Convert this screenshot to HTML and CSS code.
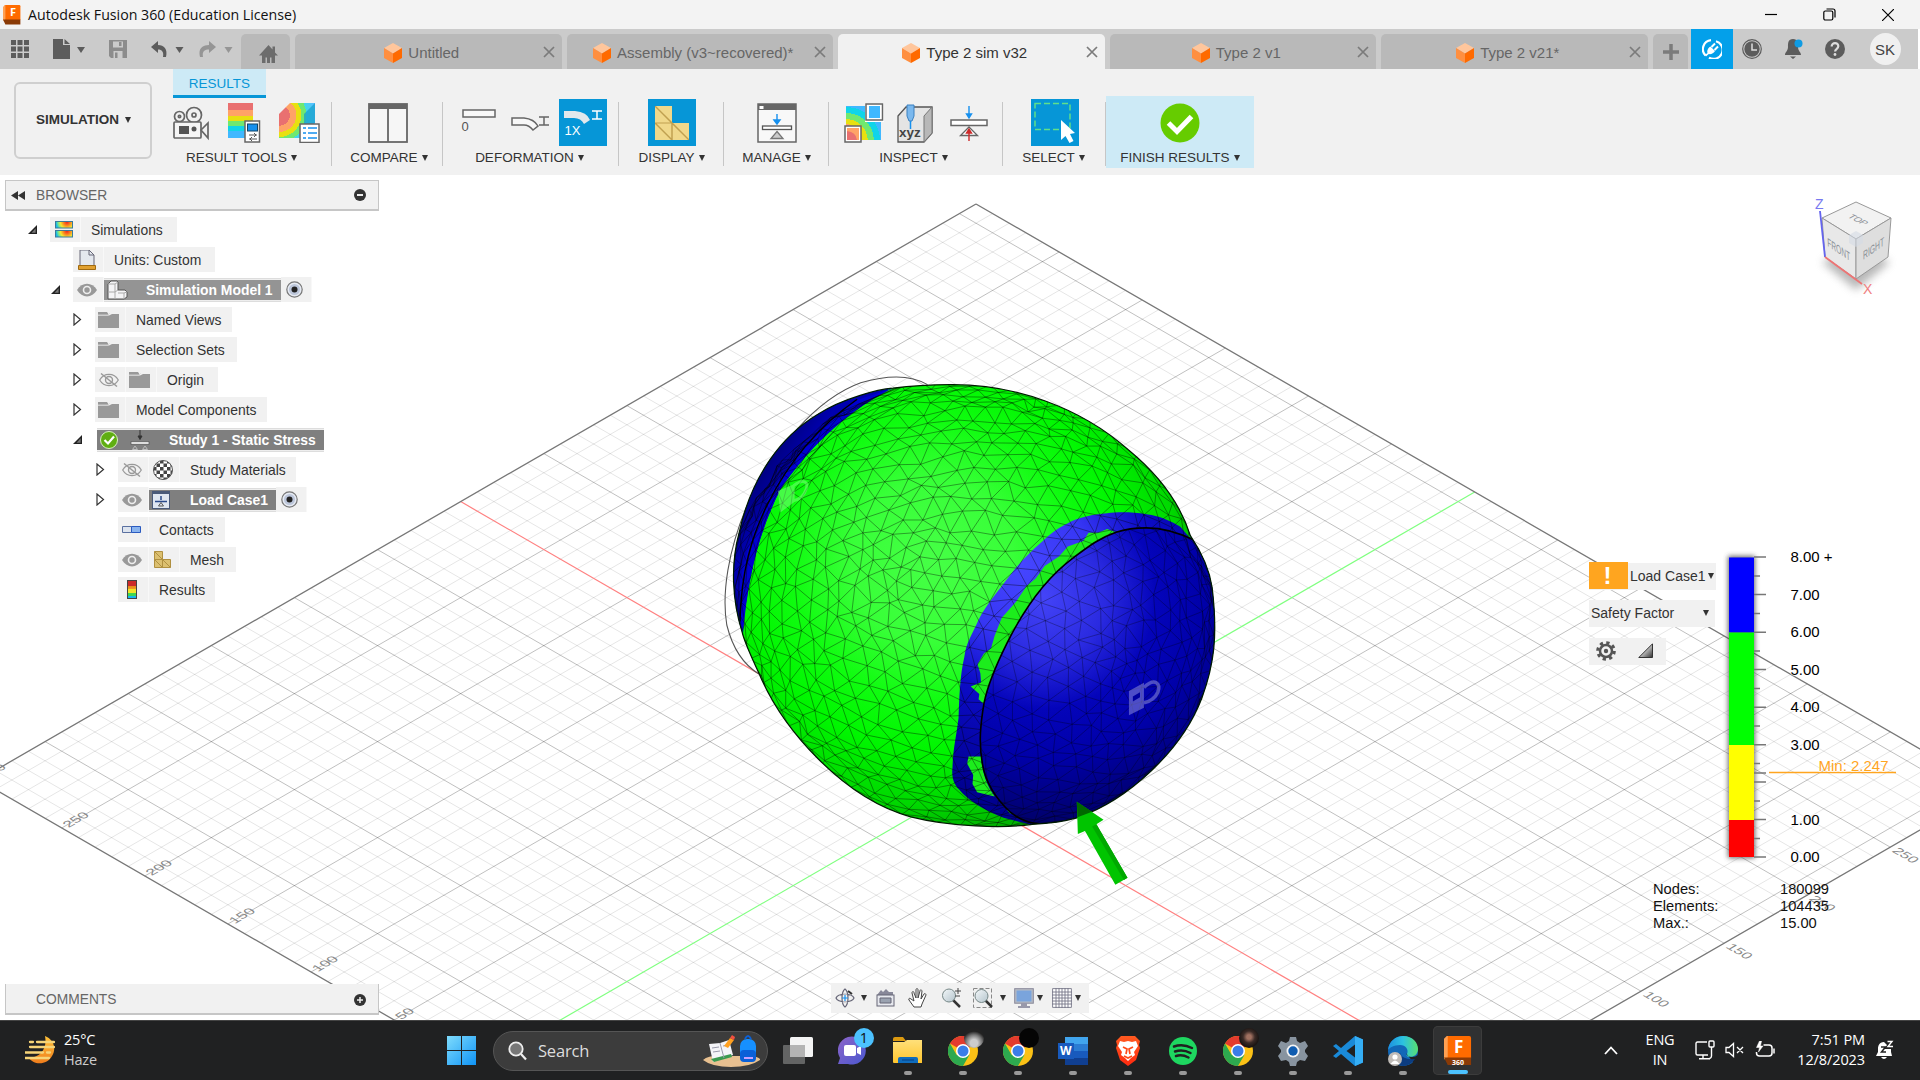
FILE: index.html
```html
<!DOCTYPE html>
<html lang="en">
<head>
<meta charset="utf-8">
<title>Autodesk Fusion 360 (Education License)</title>
<link rel="stylesheet" href="styles.css">
</head>
<body>
<svg class="defs" width="0" height="0" aria-hidden="true">
  <defs>
    <linearGradient id="g-rainbow" x1="0" y1="0" x2="0" y2="1"><stop offset="0" stop-color="#e97070"/><stop offset=".2" stop-color="#e97070"/><stop offset=".2" stop-color="#ffa366"/><stop offset=".36" stop-color="#ffa366"/><stop offset=".36" stop-color="#e8e010"/><stop offset=".5" stop-color="#e8e010"/><stop offset=".5" stop-color="#70e870"/><stop offset=".65" stop-color="#70e870"/><stop offset=".65" stop-color="#10d4e8"/><stop offset=".8" stop-color="#10d4e8"/><stop offset=".8" stop-color="#40b8ff"/></linearGradient>
    <linearGradient id="g-results" x1="0" y1="0" x2="0" y2="1"><stop offset=".3" stop-color="#cc2a2a"/><stop offset=".3" stop-color="#e8861a"/><stop offset=".5" stop-color="#f0a020"/><stop offset=".5" stop-color="#f2e42a"/><stop offset=".68" stop-color="#f2e42a"/><stop offset=".68" stop-color="#40d850"/><stop offset=".84" stop-color="#40d850"/><stop offset=".84" stop-color="#14b8f0"/></linearGradient>
    <radialGradient id="g-contour" gradientUnits="userSpaceOnUse" cx="12" cy="1" r="11"><stop offset="0" stop-color="#f02020"/><stop offset=".3" stop-color="#f88020"/><stop offset=".6" stop-color="#f4e830"/><stop offset=".85" stop-color="#60e0a0"/><stop offset="1" stop-color="#18b8e8"/></radialGradient>
    <radialGradient id="g-stress" cx="0" cy=".35" r="1"><stop offset=".3" stop-color="#e97070"/><stop offset=".3" stop-color="#ffa366"/><stop offset=".48" stop-color="#ffa366"/><stop offset=".48" stop-color="#e8e010"/><stop offset=".62" stop-color="#e8e010"/><stop offset=".62" stop-color="#70e870"/><stop offset=".76" stop-color="#70e870"/><stop offset=".76" stop-color="#40d8e8"/><stop offset="1" stop-color="#58c0ff"/></radialGradient>
    <radialGradient id="g-probe" cx="0" cy="1" r="1.1"><stop offset=".3" stop-color="#e97070"/><stop offset=".3" stop-color="#ffa366"/><stop offset=".42" stop-color="#ffa366"/><stop offset=".42" stop-color="#e8e010"/><stop offset=".56" stop-color="#e8e010"/><stop offset=".56" stop-color="#70e870"/><stop offset=".72" stop-color="#70e870"/><stop offset=".72" stop-color="#10d4e8"/><stop offset=".88" stop-color="#10d4e8"/><stop offset=".88" stop-color="#40b8ff"/></radialGradient>
    <linearGradient id="g-win" x1="0" y1="0" x2="1" y2="1"><stop offset="0" stop-color="#7fdcfd"/><stop offset="1" stop-color="#0f93f5"/></linearGradient>
    <linearGradient id="g-moon" x1="0" y1="0" x2="0" y2="1"><stop offset="0" stop-color="#ffc23a"/><stop offset="1" stop-color="#ef7d1c"/></linearGradient>
    <linearGradient id="g-folder" x1="0" y1="0" x2="0" y2="1"><stop offset="0" stop-color="#ffe07a"/><stop offset="1" stop-color="#ffc52e"/></linearGradient>
    <linearGradient id="g-chat" x1="0" y1="0" x2="1" y2="1"><stop offset="0" stop-color="#8c64c8"/><stop offset="1" stop-color="#4a58d0"/></linearGradient>
    <linearGradient id="g-brave" x1="0" y1="0" x2="0" y2="1"><stop offset="0" stop-color="#ff5a20"/><stop offset="1" stop-color="#ff2a10"/></linearGradient>
    <linearGradient id="g-edge" x1="0" y1="0" x2="1" y2="0"><stop offset="0" stop-color="#1c8fe0"/><stop offset=".5" stop-color="#2cc3e0"/><stop offset="1" stop-color="#58e070"/></linearGradient>
    <linearGradient id="g-glass" x1="0" y1="0" x2="1" y2="1"><stop offset="0" stop-color="#f4f8fa"/><stop offset="1" stop-color="#b4c4cc"/></linearGradient>
    <linearGradient id="g-tri" x1="0" y1="0" x2="1" y2="1"><stop offset=".3" stop-color="#f4f4f4"/><stop offset="1" stop-color="#303030"/></linearGradient>
    <symbol id="cube" viewBox="0 0 18 20"><path d="M9 0 18 5 9 10.500 0 5z" fill="#ffc69c"/><path d="M0 5l9 5.500V20L0 15z" fill="#ff8f40"/><path d="M18 5l-9 5.500V20l9-5z" fill="#ff6a00"/></symbol>
    <symbol id="close" viewBox="0 0 12 12"><path d="M1 1 11 11M11 1 1 11" stroke="#7b7b7b" stroke-width="1.700" fill="none"/></symbol>
    <symbol id="folder" viewBox="0 0 21 17"><path d="M0 1h9l2 3h-11zM0 4.500h11l3-1.500h7v14H0z" fill="#999"/><path d="M0 4h10l2-2" stroke="#ddd" stroke-width=".8" fill="none"/></symbol>
    <symbol id="eye" viewBox="0 0 20 14"><path d="M0 7C5-1.500 15-1.500 20 7 15 15.500 5 15.500 0 7z" fill="#999"/><circle cx="10" cy="7" r="3.500" fill="none" stroke="#eee" stroke-width="1.600"/></symbol>
    <symbol id="eyeoff" viewBox="0 0 20 14"><path d="M.7 7C5-.5 15-.5 19.300 7 15 14.500 5 14.500 .7 7z" fill="none" stroke="#999" stroke-width="1.200"/><circle cx="10" cy="7" r="3.500" fill="none" stroke="#999" stroke-width="1.400"/><path d="M2 .5 18 13.500" stroke="#999" stroke-width="1.400"/></symbol>
    <symbol id="open" viewBox="0 0 10 10"><path d="M10 0V10H0z" fill="#222"/><path d="M8.500 3.500v5H4z" fill="#777"/></symbol>
    <symbol id="shut" viewBox="0 0 9 13"><path d="M1 1v11l6.500-5.500z" fill="#fff" stroke="#333" stroke-width="1.200"/></symbol>
    <symbol id="radio" viewBox="0 0 17 17"><circle cx="8.500" cy="8.500" r="7.700" fill="#e6eaf2" stroke="#777" stroke-width="1.200"/><circle cx="8.500" cy="8.500" r="5.500" fill="#bcc6da"/><circle cx="8.500" cy="8.500" r="3" fill="#222"/></symbol>
    <symbol id="mesh" viewBox="0 0 28 34"><path d="M0 0h14v17h14v17H0z" fill="#f0d88a"/><path d="M0 0 14 17M0 17h14v17M0 17l14 17M14 17l14 17M0 0h14v17h14v17H0z" fill="none" stroke="#c0a050" stroke-width="1.300"/></symbol>
    <symbol id="mesh-dark" viewBox="0 0 17 17"><path d="M.5 .5h8v8h8v8H.5z" fill="#dcc070" stroke="#b09040"/><path d="M.5 .5l8 8M.5 8.500h8v8M.5 8.500l8 8M8.500 8.500l8 8" fill="none" stroke="#b09040"/></symbol>
    <symbol id="chrome" viewBox="0 0 30 30"><circle cx="15" cy="15" r="15" fill="#fbc116"/><path d="M15 15 2 7.500A15 15 0 0 1 28 7.500z" fill="#e33b2e"/><path d="M2 7.500A15 15 0 0 0 15 30l6.500-11.300L8.500 18.700z" fill="#2da94f"/><circle cx="15" cy="15" r="7" fill="#fff"/><circle cx="15" cy="15" r="5.500" fill="#3a7de8"/></symbol>
    <symbol id="f360" viewBox="0 0 30 32"><path d="M3 0h24a2 2 0 0 1 2 2v22H3z" fill="#ff6b00"/><path d="M3 0 0 3v22l4-2V0z" fill="#ffa052"/><path d="M0 23h29v8H4z" fill="#8a3a06"/></symbol>
  </defs>
</svg>

<header class="titlebar">
  <span class="app-icon"><svg viewBox="0 0 30 32" preserveAspectRatio="none"><use href="#f360"/></svg><b>F</b></span>
  <span class="title">Autodesk Fusion 360 (Education License)</span>
  <div class="win-buttons">
    <svg width="12" height="12" viewBox="0 0 12 12"><path d="M0 5.500h12" stroke="#000" stroke-width="1.200"/></svg>
    <svg width="13" height="13" viewBox="0 0 13 13" fill="none" stroke="#000" stroke-width="1.200"><rect x=".8" y="3" width="9" height="9" rx="1.500"/><path d="M3.500 1h6.500a2 2 0 0 1 2 2v6.500"/></svg>
    <svg width="12" height="12" viewBox="0 0 12 12" stroke="#000" stroke-width="1.200"><path d="M0 0 12 12M12 0 0 12"/></svg>
  </div>
</header>

<nav class="tabbar">
  <div class="quick">
    <svg width="18" height="18" viewBox="0 0 18 18" fill="#5c5c5c"><path d="M0 0h5v5H0zM6.500 0h5v5h-5zM13 0h5v5h-5zM0 6.500h5v5H0zM6.500 6.500h5v5h-5zM13 6.500h5v5h-5zM0 13h5v5H0zM6.500 13h5v5h-5zM13 13h5v5h-5z"/></svg>
    <svg class="q-file" width="33" height="20" viewBox="0 0 33 20" fill="#5c5c5c"><path d="M0 0h10v6h7v14H0zM11.500 0 17 5h-5.500z"/><path d="M24 8h8l-4 6z"/></svg>
    <svg class="q-save" width="18" height="18" viewBox="0 0 18 18"><path d="M0 0h18v18H2l-2-2z" fill="#8c8c8c"/><path d="M4 1.500h10v6H4zM4.500 11h9v7h-9z" fill="#cbcbcb"/><path d="M10 2h2.500v4H10zM6 12.500h2.500V18H6z" fill="#8c8c8c"/></svg>
    <svg class="q-undo" width="34" height="17" viewBox="0 0 34 17"><path d="M7 0v4C13 4 17 8 15 16h-3c1-5-1-7.500-5-7.500V12L0 6z" fill="#5c5c5c"/><path d="M24.500 6h8l-4 6z" fill="#5c5c5c"/></svg>
    <svg class="q-redo" width="35" height="17" viewBox="0 0 35 17"><path d="M10 0v4C3 4-1 8 1 16h3c-1-5 1-7.500 6-7.500V12l7-6z" fill="#959595"/><path d="M25.500 6h8l-4 6z" fill="#959595"/></svg>
  </div>
  <div class="tab home"><svg width="19" height="18" viewBox="0 0 19 18" fill="#6c6c6c"><path d="M0 10.500 9.500 0l4 4.500V1.500H16v6l3 3h-3V18h-3.500v-5.500h-1.500V18H8v-5.500H6.500V18H3v-7.500z"/></svg></div>
  <div class="tab"><div class="tab-name"><svg width="18" height="20"><use href="#cube"/></svg>Untitled</div><svg class="x" width="12" height="12"><use href="#close"/></svg></div>
  <div class="tab"><div class="tab-name"><svg width="18" height="20"><use href="#cube"/></svg>Assembly (v3~recovered)*</div><svg class="x" width="12" height="12"><use href="#close"/></svg></div>
  <div class="tab active"><div class="tab-name"><svg width="18" height="20"><use href="#cube"/></svg>Type 2 sim v32</div><svg class="x" width="12" height="12"><use href="#close"/></svg></div>
  <div class="tab"><div class="tab-name"><svg width="18" height="20"><use href="#cube"/></svg>Type 2 v1</div><svg class="x" width="12" height="12"><use href="#close"/></svg></div>
  <div class="tab"><div class="tab-name"><svg width="18" height="20"><use href="#cube"/></svg>Type 2 v21*</div><svg class="x" width="12" height="12"><use href="#close"/></svg></div>
  <div class="tab plus"><svg width="16" height="16" viewBox="0 0 16 16"><path d="M8 0v16M0 8h16" stroke="#7b7b7b" stroke-width="3.500"/></svg></div>
  <div class="account">
    <span class="ext"><svg width="20" height="20" viewBox="0 0 20 20"><path d="M3.500 16.500A9 9 0 0 1 9 1.200M14 2.200A9 9 0 1 1 7 18.600" fill="none" stroke="#fff" stroke-width="2.200"/><path d="M5.500 14c-.7-2 .5-5.500 3-6.500l4.500 4.500c-1 2.500-4.500 3.500-6.200 3L4 17.500 2.800 16z" fill="#fff"/><path d="M9.500 8l3.500-3.500M12.500 11l3.500-3.500" stroke="#fff" stroke-width="2"/></svg></span>
    <svg width="20" height="20" viewBox="0 0 20 20"><circle cx="10" cy="10" r="9.300" fill="none" stroke="#5c5c5c" stroke-width="1.200"/><circle cx="10" cy="10" r="7.700" fill="#5c5c5c"/><path d="M10 4.500V11h5" fill="none" stroke="#ddd" stroke-width="1.500"/></svg>
    <svg width="20" height="20" viewBox="0 0 20 20"><path d="M9 0c5 0 5 4 5 8s3 5 3 8H1c0-3 3-4 3-8s0-8 5-8zM6 17.500h6L9 20z" fill="#5c5c5c"/><circle cx="14.500" cy="4.500" r="4" fill="#0f9be3"/></svg>
    <svg width="20" height="20" viewBox="0 0 20 20"><circle cx="10" cy="10" r="10" fill="#5c5c5c"/><path d="M6.700 7.500C6.500 3 13.500 3 13.300 7.300c0 2.500-3.200 2.500-3.200 5.200" fill="none" stroke="#ddd" stroke-width="2.200"/><circle cx="10" cy="15.500" r="1.400" fill="#ddd"/></svg>
    <span class="avatar">SK</span>
  </div>
</nav>

<section class="ribbon">
  <div class="workspace">SIMULATION<i class="caret"></i></div>
  <div class="group g-tools">
    <div class="ribbon-tab">RESULTS</div>
    <div class="icons">
      <svg width="37" height="40" viewBox="0 0 37 40" fill="none" stroke="#666" stroke-width="1.700"><circle cx="6.500" cy="13.500" r="5"/><circle cx="6.500" cy="13.500" r="1.200"/><circle cx="21" cy="12" r="7.500"/><circle cx="21" cy="12" r="2"/><rect x="1" y="19" width="27" height="16" rx="1" fill="#f5f5f5"/><path d="M28 27l7-7v15z"/><rect x="6" y="23" width="10" height="8" fill="#555" stroke="none"/><circle cx="21" cy="26" r="2.500" fill="#555" stroke="none"/></svg>
      <svg width="33" height="40" viewBox="0 0 33 40"><rect width="25" height="35" y="0" fill="url(#g-rainbow)"/><rect x="17" y="18" width="14.500" height="21" fill="#fff" stroke="#666" stroke-width="1.500"/><rect x="19.500" y="21" width="10" height="7" fill="#1690ee" stroke="#146"/><path d="M21 32h8M26 30l2 2-2 2M29 36h-8m3-2-2 2 2 2" stroke="#555" fill="none"/></svg>
      <svg width="41" height="40" viewBox="0 0 41 40"><path d="M0 11 11 0h25v20L25 35H0z" fill="url(#g-stress)"/><path d="M25 11 36 0v20L25 35z" fill="#18a0cc" opacity=".75"/><rect x="21" y="21" width="19" height="18.500" fill="#fff" stroke="#666" stroke-width="1.500"/><path d="M24 25h3M24 30h3M24 35h3M29 25h9M29 30h9M29 35h9" stroke="#1690ee" stroke-width="1.700"/></svg>
    </div>
    <div class="label">RESULT TOOLS<i class="caret"></i></div>
  </div>
  <div class="group g-compare"><div class="icons"><svg width="40" height="40" viewBox="0 0 40 40"><rect x="1" y="1" width="38" height="38" fill="#f6f6f6" stroke="#666" stroke-width="1.800"/><path d="M1 1h38v5H1z" fill="#666"/><path d="M20 6v33" stroke="#666" stroke-width="1.800"/></svg></div><div class="label">COMPARE<i class="caret"></i></div></div>
  <div class="group g-deform">
    <div class="icons">
      <span class="deform"><svg width="34" height="10" viewBox="0 0 34 10"><rect x="1" y="2" width="32" height="7" fill="#f8f8f8" stroke="#666" stroke-width="1.500"/></svg><em>0</em></span>
      <svg width="38" height="40" viewBox="0 0 38 40" fill="#f8f8f8" stroke="#666" stroke-width="1.500"><path d="M1 15h12q10 1 14 8l-5 4q-4-5-9-5H1z"/><path d="M28 14h10M28 22h10M33 14v8"/></svg>
      <span class="tile on"><svg width="48" height="47" viewBox="0 0 48 47"><path d="M5 12h11q12 1 15 9l-6 4q-3-6-10-6H5z" fill="#e2e8ec"/><path d="M33 12h10M33 20h10M38 12v8" stroke="#fff" stroke-width="1.500"/></svg><em>1X</em></span>
    </div><div class="label">DEFORMATION<i class="caret"></i></div></div>
  <div class="group g-display"><div class="icons"><span class="tile on"><svg width="34" height="34" viewBox="0 0 28 34" preserveAspectRatio="none"><path d="M0 0h14v17h14v17H0z" fill="#f0d88a"/><path d="M0 0 14 17M0 17h14v17M0 17l14 17M14 17l14 17M14 17v17" fill="none" stroke="#c0a050" stroke-width="1.200"/></svg></span></div><div class="label">DISPLAY<i class="caret"></i></div></div>
  <div class="group g-manage"><div class="icons"><svg width="40" height="40" viewBox="0 0 40 40"><rect x="1" y="1" width="38" height="38" fill="#f8f8f8" stroke="#666" stroke-width="1.500"/><path d="M1 1h38v6H1z" fill="#666"/><path d="M2.500 3h4v3h-4z" fill="#fff"/><path d="M20 11v8M17 17l3 4 3-4z" stroke="#1690ee" fill="#1690ee" stroke-width="1.400"/><rect x="5.500" y="23" width="29" height="3.500" fill="#fff" stroke="#555" stroke-width="1.300"/><path d="M20 28.500l6 7H14z" fill="#ccc" stroke="#777" stroke-width="1.300"/></svg></div><div class="label">MANAGE<i class="caret"></i></div></div>
  <div class="group g-inspect">
    <div class="icons">
      <svg width="40" height="40" viewBox="0 0 40 40"><rect x="2" y="3" width="35" height="34" fill="url(#g-probe)"/><rect x="23" y="1" width="15" height="16" fill="#40b8ff" stroke="#fff" stroke-width="4"/><rect x="22" y="1" width="16.500" height="16" fill="none" stroke="#666" stroke-width="1.500"/><path d="M1 23h16v16H1z" fill="#fff" stroke="#666" stroke-width="1.500"/><path d="M3 25h12v12H3z" fill="#ffa366"/><path d="M3 28q9 1 10 9H3z" fill="#e97070"/></svg>
      <svg width="36" height="40" viewBox="0 0 36 40"><path d="M1 13 9 4h26v26l-8 9H1z" fill="#e4e4e4" stroke="#555" stroke-width="1.300"/><path d="M27 13 35 4v26l-8 9z" fill="#b8b8b8" stroke="#777"/><path d="M10 2h7v11l-2 5h-3l-2-5z" fill="#7ab8ee" stroke="#3a80c0"/><path d="M13.500 18v8" stroke="#1690ee" stroke-width="1.500"/><text x="2" y="34" class="xyz-text">xyz</text></svg>
      <svg width="38" height="40" viewBox="0 0 38 40"><path d="M19 3v10M16.500 11l2.500 4 2.500-4z" stroke="#1690ee" fill="#1690ee" stroke-width="1.400"/><rect x="1" y="17" width="36" height="5.500" fill="#fff" stroke="#666" stroke-width="1.500"/><path d="M19 24l8.500 8.500h-17z" fill="#fff" stroke="#666" stroke-width="1.300"/><path d="M19 38V27M16.500 30l2.500-4 2.500 4z" stroke="#cc2a2a" fill="#cc2a2a" stroke-width="1.400"/></svg>
    </div><div class="label">INSPECT<i class="caret"></i></div></div>
  <div class="group g-select"><div class="icons"><span class="tile on"><svg width="48" height="47" viewBox="0 0 48 47"><rect x="4" y="4.500" width="35" height="26" fill="none" stroke="#5fe08a" stroke-width="1.500" stroke-dasharray="6 3"/><path d="M30 21v20l4.500-4 4 7 4-2-3.500-7 5-1z" fill="#fff"/></svg></span></div><div class="label">SELECT<i class="caret"></i></div></div>
  <div class="group g-finish"><div class="icons"><svg width="40" height="40" viewBox="0 0 40 40"><circle cx="20" cy="20" r="19.500" fill="#66cc00"/><path d="M8.500 20 17 28.500 31.500 13.500" fill="none" stroke="#fff" stroke-width="5"/></svg></div><div class="label">FINISH RESULTS<i class="caret"></i></div></div>
</section>

<main class="viewport">
  <svg class="scene" width="1920" height="845" viewBox="0 175 1920 845">
    <defs>
      <radialGradient id="s-green" gradientUnits="userSpaceOnUse" cx="650" cy="590" r="760"><stop offset="0" stop-color="#46ff46"/><stop offset=".3" stop-color="#38ff38"/><stop offset=".52" stop-color="#10fc10"/><stop offset=".7" stop-color="#00f600"/><stop offset=".9" stop-color="#00d800"/><stop offset="1" stop-color="#00b400"/></radialGradient>
      <radialGradient id="s-band" gradientUnits="userSpaceOnUse" cx="900" cy="600" r="650"><stop offset="0" stop-color="#4646ff"/><stop offset=".3" stop-color="#3636f4"/><stop offset=".55" stop-color="#0c0cc8"/><stop offset="1" stop-color="#000090"/></radialGradient>
      <radialGradient id="s-cap" gradientUnits="userSpaceOnUse" cx="960" cy="690" r="700"><stop offset="0" stop-color="#4444f8"/><stop offset=".25" stop-color="#2a2ae0"/><stop offset=".45" stop-color="#0404ba"/><stop offset=".65" stop-color="#0000a8"/><stop offset=".85" stop-color="#000078"/><stop offset="1" stop-color="#000050"/></radialGradient>
      <linearGradient id="s-back" gradientUnits="userSpaceOnUse" x1="150" y1="350" x2="230" y2="400"><stop offset="0" stop-color="#000078"/><stop offset="1" stop-color="#0000b0"/></linearGradient>
      <clipPath id="c-body"><path id="body-shape" d="M700 97C880 95 1065 160 1200 280C1285 350 1345 430 1373 520C1410 575 1427 620 1434 665C1450 800 1440 880 1405 975C1350 1120 1200 1260 1055 1310C1010 1323 970 1326 930 1328C850 1340 700 1335 590 1307C400 1255 230 1060 165 905C140 850 125 820 118 790C90 700 85 600 110 510C145 350 230 240 330 180C400 135 500 110 540 107C600 99 640 97 700 97Z"/></clipPath>
      <clipPath id="c-cap"><path d="M1373 525C1335 508 1290 498 1250 498C1215 498 1190 502 1165 510C1120 525 1085 552 1045 582C960 645 900 740 860 820C825 890 805 940 795 990C785 1050 780 1100 791 1160C800 1210 830 1258 870 1295C895 1315 920 1325 950 1327L1500 1400V600Z"/></clipPath>
    </defs>
    <path id="grid-minor" class="minor"/><path id="grid-major" class="major"/>
    <path id="grid-x" class="axis-x"/><path id="grid-y" class="axis-y"/><path id="grid-edge" class="edge"/>
    <g id="grid-labels"></g>
    <g transform="translate(700 350) scale(.35714)">
      <path d="M637 97C600 75 540 65 450 92C330 135 200 280 130 440C80 560 60 680 75 770C90 830 120 880 165 907" fill="none" stroke="#555" stroke-width="3"/>
      <use href="#body-shape" fill="url(#s-green)"/>
      <g clip-path="url(#c-body)">
        <path d="M0 0H560L525 114C400 180 300 280 225 390C170 500 135 620 118 800L0 900Z" fill="url(#s-back)"/>
        <path d="M560 100 525 114C400 180 300 280 225 390C170 500 135 620 120 800L108 680C122 580 150 500 190 420C260 290 340 210 440 140Z" fill="#0000d0"/>
        <path d="M1400 560 1345 495C1320 480 1290 465 1250 460C1210 453 1170 453 1140 457C1100 460 1060 468 1030 485C1000 500 980 515 960 535C920 570 890 600 865 635C835 675 800 715 780 755C760 800 745 820 740 860C728 910 726 970 724 1030C718 1080 708 1120 707 1170C704 1195 710 1215 725 1230C750 1262 800 1290 850 1310L930 1330 1200 1330Z" fill="url(#s-band)"/>
        <path d="M1165 510 1140 501 1115 512 1088 512 1073 535 1030 550 1005 578 965 605 940 640 915 660 885 705 845 750 825 800 815 835 795 850 777 880 785 905 787 930 758 942 782 963 780 978 797 993C805 940 830 880 860 820C900 740 960 645 1045 582ZM787 1138 752 1138 748 1158 765 1190 763 1215 776 1238 825 1250C800 1215 790 1180 787 1138ZM1325 515 1345 518 1362 538ZM858 1286 875 1296 868 1298Z" fill="#1ced1c"/>
        <path id="mesh-body" class="mesh"/>
        <path d="M440 138C330 215 250 310 190 430C145 520 115 620 112 760" fill="none" stroke="#000" stroke-width="4"/>
        <g clip-path="url(#c-cap)"><path d="M700 400H1500V1400H700z" fill="url(#s-cap)"/><path id="mesh-cap" class="mesh cap"/></g>
        <path d="M1390 535C1335 508 1290 498 1250 498C1215 498 1190 502 1165 510C1120 525 1085 552 1045 582C960 645 900 740 860 820C825 890 805 940 795 990C785 1050 780 1100 791 1160C800 1210 830 1258 870 1295C895 1315 920 1325 950 1327" fill="none" stroke="#000" stroke-width="4.500"/>
      </g>
      <use href="#body-shape" fill="none" stroke="#001a00" stroke-width="3.500"/>
      <g fill="#8080d8" opacity=".6"><path d="M1201 955 1243 932V1002L1201 1023Z"/><path d="M1243 945C1275 915 1290 935 1282 958C1272 980 1255 985 1243 988" fill="none" stroke="#8080d8" stroke-width="10"/></g><path d="M1212 970 1232 958V972L1212 984Z" fill="#0000a0"/>
      <g fill="#90ff90" opacity=".45"><path d="M218 395 265 375V425L225 455Z"/><path d="M262 380C290 358 305 370 297 390C290 412 272 420 262 422" fill="none" stroke="#90ff90" stroke-width="8"/></g>
      <path d="M1055 1265 1130 1315 1110 1328 1197 1478 1163 1497 1078 1347 1058 1355Z" fill="#00c400"/><path d="M1055 1265 1098 1293 1057 1308Z" fill="#006800"/><path d="M1110 1328 1197 1478 1187 1484 1098 1334Z" fill="#00a800"/>
    </g>
  </svg>

  <svg class="viewcube" width="90" height="110" viewBox="1800 190 90 110">
    <defs><filter id="soft" x="-30%" y="-30%" width="160%" height="160%"><feGaussianBlur stdDeviation="4"/></filter></defs>
    <path d="M1822 262 1856 290 1890 262 1856 245z" fill="#888" opacity=".6" filter="url(#soft)"/>
    <path d="M1856 202 1891 218 1856 239 1822 218z" fill="#f2f2f2" stroke="#999"/><path d="M1822 218 1856 239V279L1825 257z" fill="#e8e8e8" stroke="#999"/><path d="M1891 218 1856 239V279L1888 257z" fill="#dedede" stroke="#999"/>
    <path d="M1849 235l7-4 7 4v8l-7 4-7-4z" fill="#d4dae4" opacity=".6"/>
    <path d="M1820 211 1825 257" stroke="#6464ee" stroke-width="1.800"/><path d="M1825 257 1862 284" stroke="#ee7474" stroke-width="1.800"/>
    <text class="face" transform="matrix(.83 .42 -.8 .45 1847 217)" font-size="10">TOP</text>
    <text class="face" transform="matrix(.66 .44 .05 1.200 1827.500 246)" font-size="10">FRONT</text>
    <text class="face" transform="matrix(.68 -.48 0 1.200 1863 260)" font-size="10">RIGHT</text>
    <text x="1815" y="209" class="ax z">Z</text><text x="1863" y="294" class="ax xx">X</text>
  </svg>

  <aside class="browser">
    <div class="panel-head"><svg width="14" height="9" viewBox="0 0 14 9" fill="#333"><path d="M7 0v9L0 4.500zM14 0v9L7 4.500z"/></svg><span>BROWSER</span><svg width="12" height="12" viewBox="0 0 12 12"><circle cx="6" cy="6" r="6" fill="#333"/><path d="M3 6h6" stroke="#eee" stroke-width="2"/></svg></div>
    <div class="tree">
      <div class="row l0"><span class="tw"><svg width="9" height="9"><use href="#open"/></svg></span><span class="c"><svg width="18" height="17" viewBox="0 0 18 17"><rect x=".5" y=".5" width="17" height="6.500" fill="url(#g-contour)" stroke="#3a7a9a"/><g transform="translate(0 9)"><rect x=".5" y=".5" width="17" height="6.500" fill="url(#g-contour)" stroke="#3a7a9a"/></g></svg></span><span class="t w96">Simulations</span></div>
      <div class="row l1"><span class="tw"></span><span class="c"><svg width="18" height="20" viewBox="0 0 18 20"><path d="M2 0h9l5 5v11H2z" fill="#e4e8ee" stroke="#667"/><path d="M11 0v5h5" fill="none" stroke="#667"/><path d="M.5 15.500h17v4H.5z" fill="#e0a030" stroke="#a06a10"/></svg></span><span class="t w111">Units: Custom</span></div>
      <div class="row l1"><span class="tw"><svg width="9" height="9"><use href="#open"/></svg></span><span class="c"><svg width="20" height="14"><use href="#eye"/></svg></span><span class="sel light"><svg width="21" height="20" viewBox="0 0 21 20" fill="#f4f4f6" stroke="#555"><path d="M1 4 4 1h6l1 1v8h7l2 2v5l-3 2H1z"/><path d="M1 4h7l3-2M8 4v15M1 12h7l3-2M11 13h6l3-1M17 13v6" fill="none" stroke="#aaa"/></svg><b>Simulation Model 1</b></span><span class="c"><svg width="17" height="17"><use href="#radio"/></svg></span></div>
      <div class="row l2"><span class="tw"><svg width="9" height="13"><use href="#shut"/></svg></span><span class="c"><svg width="21" height="17"><use href="#folder"/></svg></span><span class="t w106">Named Views</span></div>
      <div class="row l2"><span class="tw"><svg width="9" height="13"><use href="#shut"/></svg></span><span class="c"><svg width="21" height="17"><use href="#folder"/></svg></span><span class="t w111">Selection Sets</span></div>
      <div class="row l2"><span class="tw"><svg width="9" height="13"><use href="#shut"/></svg></span><span class="c"><svg width="20" height="14"><use href="#eyeoff"/></svg></span><span class="c"><svg width="21" height="17"><use href="#folder"/></svg></span><span class="t w61">Origin</span></div>
      <div class="row l2"><span class="tw"><svg width="9" height="13"><use href="#shut"/></svg></span><span class="c"><svg width="21" height="17"><use href="#folder"/></svg></span><span class="t w141">Model Components</span></div>
      <div class="row l2"><span class="tw"><svg width="9" height="9"><use href="#open"/></svg></span><span class="sel study"><svg width="18" height="18" viewBox="0 0 18 18"><circle cx="9" cy="9" r="8.500" fill="#5fae12" stroke="#d8f0c0"/><path d="M4.500 9 8 12.500 14 5.500" fill="none" stroke="#fff" stroke-width="2.200"/></svg><svg class="stress" width="20" height="20" viewBox="0 0 20 20"><path d="M10 0v8M8 6l2 3.500L12 6z" stroke="#333" fill="#333"/><path d="M1 11.500h18v3H1z" fill="#ddd" stroke="#555" stroke-width=".7"/><path d="M5 16l2.500 3.500h-5zM15 16l2.500 3.500h-5z" fill="none" stroke="#bbb"/></svg><b>Study 1 - Static Stress</b></span></div>
      <div class="row l3"><span class="tw"><svg width="9" height="13"><use href="#shut"/></svg></span><span class="c"><svg width="20" height="14"><use href="#eyeoff"/></svg></span><span class="c"><svg width="20" height="20" viewBox="0 0 20 20"><defs><pattern id="checker" width="7" height="7" patternUnits="userSpaceOnUse"><rect width="7" height="7" fill="#fff"/><path d="M0 0h3.500v3.500H0zM3.500 3.500H7V7H3.500z" fill="#444"/></pattern></defs><circle cx="10" cy="10" r="9.500" fill="url(#checker)" stroke="#555"/></svg></span><span class="t w116">Study Materials</span></div>
      <div class="row l3"><span class="tw"><svg width="9" height="13"><use href="#shut"/></svg></span><span class="c"><svg width="20" height="14"><use href="#eye"/></svg></span><span class="sel load"><svg width="18" height="18" viewBox="0 0 18 18"><rect x=".5" y=".5" width="17" height="17" fill="#dfe6f0" stroke="#4a5a78"/><path d="M0 0h18v3H0z" fill="#4a5a78"/><path d="M3 10.500h12M9 5v4" stroke="#2a4a8a" stroke-width="1.500"/><path d="M9 11.500l2.500 3.500h-5z" fill="none" stroke="#555"/></svg><b>Load Case1</b></span><span class="c"><svg width="17" height="17"><use href="#radio"/></svg></span></div>
      <div class="row l3"><span class="tw"></span><span class="c"><svg width="19" height="7" viewBox="0 0 19 7"><path d="M.5 .5h9v6h-9z" fill="#dde4ee" stroke="#5a70a0"/><path d="M9.500 .5h9v6h-9z" fill="#8ab4ee" stroke="#2a5ac0"/></svg></span><span class="t w76">Contacts</span></div>
      <div class="row l3"><span class="tw"></span><span class="c"><svg width="20" height="14"><use href="#eye"/></svg></span><span class="c"><svg width="17" height="17"><use href="#mesh-dark"/></svg></span><span class="t w56">Mesh</span></div>
      <div class="row l3"><span class="tw"></span><span class="c"><svg width="10" height="19" viewBox="0 0 10 19"><rect x=".5" y=".5" width="9" height="18" fill="url(#g-results)" stroke="#444"/></svg></span><span class="t w66">Results</span></div>
    </div>
  </aside>

  <div class="comments"><span>COMMENTS</span><svg width="12" height="12" viewBox="0 0 12 12"><circle cx="6" cy="6" r="6" fill="#333"/><path d="M3 6h6M6 3v6" stroke="#eee" stroke-width="1.500"/></svg></div>

  <div class="navbar">
    <svg width="20" height="20" viewBox="0 0 20 20" fill="none" stroke="#667" stroke-width="1.200"><path d="M10 1c4 3 4 15 0 18-4-3-4-15 0-18zM1 10c2-5 16-5 18 0-2 5-16 5-18 0z"/><path d="M10 6.500h-2v7h4v-7z" fill="#f1f1f1" stroke="none"/><path d="M10 7v6M7 10h6" stroke="#1690ee"/><path d="M13 3l4 3" stroke="#333" stroke-width="2"/></svg><i class="caret"></i>
    <svg class="n2" width="19" height="18" viewBox="0 0 19 18"><path d="M1 6 5 1l2 2 3-3 3 3h4v3z" fill="#889"/><rect x="1" y="6" width="17" height="11" fill="#e6e8ee" stroke="#667"/><path d="M4 9h11v5H4z" fill="#9aa2b0" stroke="#667"/></svg>
    <svg class="n3" width="20" height="20" viewBox="0 0 20 20"><path d="M6 19 1 12c-1-2 1-2 2-1l3 2L4 5c0-2 2-2 2 0l2 5V2c0-2 2-2 2 0v8l2-7c0-2 2-1 2 0l-1 8 3-5c1-1 2 0 2 1l-4 9-1 3z" fill="#fff" stroke="#444"/></svg>
    <svg class="n4" width="20" height="20" viewBox="0 0 20 20"><path d="M12 12l7 7" stroke="#333" stroke-width="2.500"/><circle cx="8" cy="7.500" r="6.500" fill="url(#g-glass)" stroke="#788"/><path d="M14 3h6M17 0v6M14 8h5" stroke="#444"/></svg>
    <svg class="n5" width="20" height="20" viewBox="0 0 20 20"><rect x=".5" y=".5" width="18" height="19" fill="none" stroke="#888" stroke-dasharray="4 2"/><path d="M12 12l7 7" stroke="#333" stroke-width="2.500"/><circle cx="8.500" cy="8" r="6.500" fill="url(#g-glass)" stroke="#788"/></svg><i class="caret c2"></i>
    <svg class="n6" width="20" height="20" viewBox="0 0 20 20"><rect x=".7" y=".7" width="18.600" height="14.500" fill="#b8bcc4" stroke="#889"/><rect x="2.500" y="2.500" width="15" height="11" fill="#7aa4dc"/><path d="M7 15h6v3h3v2H4v-2h3z" fill="#99a"/></svg><i class="caret c3"></i>
    <svg class="n7" width="20" height="20" viewBox="0 0 20 20"><path d="M.6 .6h18.800v18.800H.6zM4 0v20M7 0v20M10 0v20M13 0v20M16 0v20M0 4h20M0 7h20M0 10h20M0 13h20M0 16h20" fill="#fff" stroke="#778" stroke-width=".9"/></svg><i class="caret c3"></i>
  </div>

  <div class="result-controls">
    <div class="rc"><span class="warn">!</span><span class="rc-load">Load Case1<i class="caret"></i></span></div>
    <div class="rc safety"><span>Safety Factor</span><i class="caret"></i></div>
    <div class="rc buttons"><svg width="20" height="20" viewBox="-10 -10 20 20"><circle r="6" fill="none" stroke="#555" stroke-width="2.500"/><circle r="8.300" fill="none" stroke="#555" stroke-width="3" stroke-dasharray="3.260 3.260"/><circle r="2.200" fill="#555"/></svg><svg width="15" height="15" viewBox="0 0 15 15"><path d="M14.500 .8V14.500H.8z" fill="url(#g-tri)" stroke="#333"/></svg></div>
  </div>

  <svg class="legend" width="200" height="340" viewBox="1715 545 200 340">
    <defs><filter id="glow" x="-50%" y="-5%" width="200%" height="110%"><feGaussianBlur stdDeviation="2.500"/></filter></defs>
    <rect x="1728" y="556" width="27" height="302" fill="#444" opacity=".8" filter="url(#glow)"/>
    <rect x="1729" y="557.500" width="25" height="75" fill="#00f"/><rect x="1729" y="632.500" width="25" height="112.500" fill="#0f0"/><rect x="1729" y="745" width="25" height="75" fill="#ff0"/><rect x="1729" y="820" width="25" height="37" fill="#f00"/>
    <path d="M1754 557h12M1754 594.600h12M1754 632.200h12M1754 669.600h12M1754 707.200h12M1754 744.700h12M1754 773h12M1754 782h12M1754 819.500h12M1754 857h12M1754 576h6M1754 613.500h6M1754 651h6M1754 688.500h6M1754 726h6M1754 763.500h6M1754 801h6M1754 838.500h6" stroke="#777" stroke-width="1.500"/>
    <path d="M1769 772.500h127" stroke="#ffa51f" stroke-width="1.300"/>
    <g class="scale"><text x="1790.500" y="562">8.00 +</text><text x="1790.500" y="599.500">7.00</text><text x="1790.500" y="637">6.00</text><text x="1790.500" y="674.500">5.00</text><text x="1790.500" y="712">4.00</text><text x="1790.500" y="749.500">3.00</text><text x="1790.500" y="824.500">1.00</text><text x="1790.500" y="862">0.00</text><text x="1818.500" y="770.500" class="min">Min: 2.247</text></g>
  </svg>
  <dl class="stats"><dt>Nodes:</dt><dd>180099</dd><dt>Elements:</dt><dd>104435</dd><dt>Max.:</dt><dd>15.00</dd></dl>
</main>

<footer class="taskbar">
  <div class="weather"><svg width="30" height="30" viewBox="0 0 30 30"><path d="M20 1c8 3 12 12 7 20-5 9-18 10-24 1 9 2 20-6 17-21z" fill="url(#g-moon)"/><path d="M5 7h3M12 7h17M5 12h24M0 17.500h18M22 17.500h3M0 23h24" stroke="#f6d478" stroke-width="2.300" stroke-linecap="round"/></svg><div>25°C<br><span>Haze</span></div></div>
  <div class="apps">
    <svg width="29" height="29" viewBox="0 0 29 29" fill="url(#g-win)"><path d="M0 0h14v14H0zM15 0h14v14H15zM0 15h14v14H0zM15 15h14v14H15z"/></svg>
    <div class="search"><svg width="19" height="20" viewBox="0 0 19 20"><circle cx="8" cy="8" r="6.700" fill="#777" stroke="#eee" stroke-width="1.800"/><path d="M13 13l5 5.500" stroke="#eee" stroke-width="2.200"/></svg><span>Search</span>
      <svg width="58" height="32" viewBox="0 0 58 32"><path d="M0 25q6-5 20-4h30q8 2 7 4-10 7-29 7T0 25z" fill="#e8c090"/><path d="M6 9l11-1 9-3 4 15-9 3-11 4z" fill="#f4f4f8"/><path d="M8 24l20-5 1 3-18 5z" fill="#3a9a50"/><path d="M17 8l4 15M9 13l7-1M20 11l5-1M10 17l7-1" stroke="#99a"/><path d="M21 11l6-8 4 2-6 8z" fill="#ffa020"/><path d="M27 3l2-3 3 2-1 3z" fill="#f05040"/><rect x="37" y="4" width="16" height="23" rx="7" fill="#1690ff"/><rect x="37" y="15" width="16" height="12" rx="4" fill="#0a60d8"/><path d="M41 23h9" stroke="#c8a0ff" stroke-width="2"/><path d="M42 4q3-6 6 0" fill="none" stroke="#0a60d8" stroke-width="2"/></svg></div>
    <span class="app nodot"><svg width="30" height="30" viewBox="0 0 30 30"><rect x="7" y="1" width="23" height="20" rx="1.500" fill="#f4f4f4"/><rect x="0" y="9" width="22" height="19" rx="1" fill="#707070" opacity=".85"/><rect x="7" y="9" width="15" height="12" fill="#b4b4b4"/></svg></span>
    <span class="app nodot"><svg width="30" height="30" viewBox="0 0 30 30"><path d="M0 28l2-6a14 14 0 1 1 8 6z" fill="url(#g-chat)"/><rect x="6" y="9" width="12" height="11" rx="2" fill="#fff"/><path d="M19 12l4-2v9l-4-2z" fill="#fff"/></svg><b class="badge">1</b></span>
    <span class="app"><svg width="30" height="28" viewBox="0 0 30 28"><path d="M0 2q0-2 2-2h8l3 4H0z" fill="#dc9a10"/><path d="M0 5h11l3-2h15v23H1q-1 0-1-1z" fill="url(#g-folder)"/><path d="M5 26v-4q0-2 2-2h16q2 0 2 2v4z" fill="#0f6cbd"/><path d="M9 23h12" stroke="#084a90" stroke-width="1.300"/></svg></span>
    <span class="app"><svg width="30" height="30"><use href="#chrome"/></svg><i class="face-badge grey"></i></span>
    <span class="app"><svg width="30" height="30"><use href="#chrome"/></svg><i class="face-badge black"></i></span>
    <span class="app"><svg width="30" height="28" viewBox="0 0 30 28"><path d="M7 0h23v7H7z" fill="#41a5ee"/><path d="M7 7h23v7H7z" fill="#2b7cd3"/><path d="M7 14h23v7H7z" fill="#185abd"/><path d="M7 21h23v7H7z" fill="#103f91"/><rect y="6" width="16" height="16" fill="#185abd"/></svg><b class="word">W</b></span>
    <span class="app"><svg width="26" height="30" viewBox="0 0 26 30"><path d="M6 0h14l5 5-1 4 1 3-4 12-8 6-8-6L1 12l1-3-1-4z" fill="url(#g-brave)"/><path d="M5 5l4 1 4-1 4 1 4-1 2 5-4 6 1 3-4 3-3 3-3-3-4-3 1-3-4-6z" fill="#fff"/><path d="M8 11l4 2-1 5M18 11l-4 2 1 5M9 20l4 2 4-2" stroke="#ff4a18" stroke-width="1.700" fill="none"/></svg></span>
    <span class="app"><svg width="28" height="28" viewBox="0 0 28 28"><circle cx="14" cy="14" r="14" fill="#1ed760"/><path d="M5 9.500q9-3 18 1.500M6 14.500q8-2.500 15.500 1.500M7 19q6-2 12.500 1.500" fill="none" stroke="#202020" stroke-width="2.500" stroke-linecap="round"/></svg></span>
    <span class="app"><svg width="30" height="30"><use href="#chrome"/></svg><i class="face-badge brown"></i></span>
    <span class="app"><svg width="30" height="30" viewBox="-15 -15 30 30"><path d="M-3-14h6l1 4 3 2 5-2 3 5-3 4v2l3 4-3 5-5-1-3 2-1 4h-6l-1-4-3-2-5 1-3-5 3-4v-2l-3-4 3-5 5 2 3-2z" fill="#8894a0"/><circle r="6.500" fill="#f4f4f4"/><circle r="4.700" fill="#0f5cb0"/></svg></span>
    <span class="app"><svg width="30" height="30" viewBox="0 0 30 30"><path d="M22 0l8 3.500v23L22 30 8 18l-5 4-3-2 6-5-6-5 3-2 5 4z" fill="#1a8ad8"/><path d="M22 0l8 3.500v23L22 30z" fill="#35aef5"/><path d="M22 8.500v13L13.500 15z" fill="#202122"/></svg></span>
    <span class="app"><svg width="30" height="30" viewBox="0 0 30 30"><circle cx="15" cy="15" r="15" fill="#1268b8"/><path d="M0 14C1 5 8 0 15 0c10 0 15 7 15 13 0 5-4 8-8 8-3 0-4-1-3-3 2-4-1-9-7-9S1 12 0 14z" fill="url(#g-edge)"/><path d="M18 17q1 4 6 4 4 0 5.500-2l1 4-4 5z" fill="#202122"/><path d="M12 17q2 7 15 6-5 7-12 7-6-1-8-7 0-5 5-6z" fill="#0c3c80"/><circle cx="7" cy="23" r="7" fill="#c0bcb8"/><circle cx="7" cy="21" r="2.600" fill="#fff"/><path d="M2.500 28q4.500-7 9 0z" fill="#fff"/></svg></span>
    <span class="app current"><svg width="28" height="30" viewBox="0 0 30 32" preserveAspectRatio="none"><use href="#f360"/></svg><b class="eff">F</b><b class="n360">360</b></span>
  </div>
  <div class="tray">
    <svg class="chev" width="14" height="9" viewBox="0 0 14 9"><path d="M1 8l6-6.500L13 8" fill="none" stroke="#fff" stroke-width="1.800"/></svg>
    <div class="lang">ENG<br>IN</div>
    <svg class="net" width="20" height="20" viewBox="0 0 20 20" fill="none" stroke="#fff" stroke-width="1.400"><path d="M12 2H2.500Q1 2 1 3.500v10Q1 15 2.500 15H13M4 18.800h11M8 15v4"/><rect x="14" y="1" width="5" height="6" rx="1"/><path d="M16.500 7v9q0 2-2 2.500"/></svg>
    <svg class="snd" width="20" height="16" viewBox="0 0 20 16" fill="none" stroke="#fff" stroke-width="1.300"><path d="M1 5.500h3L8.500 1.500v13L4 10.500H1zM12 5l6 6M18 5l-6 6"/></svg>
    <svg class="bat" width="20" height="18" viewBox="0 0 20 18" fill="none" stroke="#fff" stroke-width="1.500"><path d="M8.500 4H14q3 0 3 3v5q0 3-3 3H4.500q-3 0-3-3v-1M19 7.500v5"/><path d="M4.500 0 1.500 6.500h3L3.500 11 8 5H5.500l1-5z" fill="#fff" stroke-width=".5"/></svg>
    <div class="clock">7:51 PM<br>12/8/2023</div>
    <svg class="bell" width="18" height="20" viewBox="0 0 18 20" fill="#fff"><path d="M8 2c-5 0-6 4-6 7v3l-2 4h16l-1-4v-3zM5 17h6q-3 4-6 0z"/><path d="M5 7h4.500L5.500 12H10" fill="none" stroke="#222" stroke-width="1.500"/><path d="M11 1h6l-5 6h5" fill="none" stroke="#222" stroke-width="4"/><path d="M11.500 1.500H16L12 6.500h5" fill="none" stroke="#fff" stroke-width="1.400"/></svg>
  </div>
</footer>
<script src="scene.js"></script>
</body>
</html>
```
FILE: styles.css
```css
* { box-sizing: border-box; }
body { margin: 0; width: 1920px; height: 1080px; overflow: hidden; background: #fff; color: #333; font-family: "Liberation Sans", Arial, sans-serif; display: flex; flex-direction: column; }
svg { display: block; flex: none; }
.defs { position: absolute; }
em, i { font-style: normal; }
.caret { display: inline-block; flex: none; width: 0; height: 0; border: 3.500px solid transparent; border-top: 6px solid #333; border-bottom: 0; }

.titlebar { height: 29px; flex: none; background: #f3f3f3; display: flex; align-items: center; padding-left: 3px; font-family: "Open Sans", "Noto Sans", sans-serif; color: #111; }
.app-icon { position: relative; width: 18px; height: 20px; }
.app-icon svg { width: 18px; height: 20px; }
.app-icon b { position: absolute; left: 7px; top: -1px; font-size: 11px; color: #fff; }
.title { margin-left: 7px; font-size: 14.200px; flex: 1; letter-spacing: 0; }
.win-buttons { display: flex; align-items: center; gap: 46px; padding-right: 26px; }

.tabbar { height: 40px; flex: none; background: #cbcbcb; display: flex; align-items: flex-end; gap: 5px; margin-right: 2px; }
.quick { width: 236px; height: 40px; display: flex; align-items: center; padding-left: 11px; }
.q-file { margin-left: 24px; }
.q-save { margin-left: 23px; }
.q-undo { margin-left: 24px; }
.q-redo { margin-left: 14px; }
.tab { width: 266.500px; height: 35px; border-radius: 5px 5px 0 0; background: #b9b9b9; display: flex; align-items: center; color: #666; font-size: 15px; flex: none; }
.tab-name { flex: 1; display: flex; justify-content: center; align-items: center; gap: 6px; padding: 2px 0 0 6px; }
.tab-name svg { width: 18px; height: 20px; }
.tab .x { margin-right: 7px; }
.tab.active { background: #f1f1f1; color: #333; }
.tab.home { width: 49px; justify-content: center; padding: 4px 0 0 5px; }
.tab.plus { width: 35px; justify-content: center; padding-left: 2px; }
.account { flex: 1; height: 40px; display: flex; align-items: center; gap: 21.500px; margin-left: -2px; }
.ext { width: 42px; height: 40px; background: #03a0ea; display: flex; align-items: center; justify-content: center; margin-right: -12px; }
.avatar { width: 31px; height: 32px; border-radius: 50%; background: #f0f0f0; display: flex; align-items: center; justify-content: center; font-size: 15px; color: #444; margin-left: 3px; }

.ribbon { height: 106px; flex: none; background: #f1f1f1; display: flex; }
.workspace { width: 138px; height: 77px; margin: 13px 0 0 14px; border: 2px solid #cfcfcf; border-radius: 6px; display: flex; align-items: center; justify-content: center; gap: 6px; font-weight: bold; font-size: 13.500px; padding: 0 0 2px 1px; }
.group { position: relative; display: flex; flex-direction: column; align-items: center; padding-top: 30px; }
.group:not(:last-child)::after { content: ""; position: absolute; right: 0; top: 33px; height: 64px; width: 1px; background: #c6c6c6; }
.icons { height: 47px; display: flex; align-items: center; justify-content: center; gap: 18px; }
.label { display: flex; align-items: center; gap: 4px; font-size: 13.500px; line-height: 16px; margin-top: 3px; white-space: nowrap; height: 18px; }
.g-tools { width: 180px; padding-top: 0; }
.g-tools .icons { margin-top: 1px; margin-left: 8px; gap: 18px; }
.g-tools .label { margin-right: 1px; }
.ribbon-tab { align-self: flex-start; margin-left: 21px; width: 93px; height: 29px; background: #cdeaf6; border-bottom: 3px solid #0696d7; color: #0696d7; font-size: 13.500px; display: flex; align-items: center; justify-content: center; padding-top: 2px; }
.g-compare { width: 111px; } .g-deform { width: 176px; } .g-display { width: 105px; } .g-manage { width: 105px; } .g-inspect { width: 174px; } .g-select { width: 103px; } .g-finish { width: 148px; }
.g-compare .label { margin-left: 3px; }
.g-deform .icons { gap: 15px; padding-left: 6px; }
.g-deform .tile { margin-left: -5px; }
.g-deform .label { margin-right: 3px; }
.deform { width: 34px; height: 32px; margin-top: 2px; }
.deform em, .tile em { color: #555; font-size: 13px; }
.deform em { display: block; margin-top: 1px; }
.tile { position: relative; width: 48px; height: 47px; display: flex; align-items: center; justify-content: center; }
.tile.on { background: #0696d7; }
.tile em { position: absolute; left: 6px; bottom: 8px; color: #fff; }
.g-inspect .icons { gap: 13px; } .g-inspect .icons svg:last-child { margin-left: 4px; }
.g-inspect .label { margin-right: 5px; } .g-select .label { margin-right: 2px; }
.xyz-text { font: bold 13.500px "Liberation Sans", sans-serif; fill: #444; }
.g-finish { background: #cdeaf6; height: 72px; margin-top: 27px; padding-top: 3px; }

.viewport { position: relative; height: 845px; flex: none; overflow: hidden; background: #fff; }
.scene { position: absolute; left: 0; top: 0; }
.minor { stroke: #000; stroke-opacity: .1; fill: none; stroke-width: 1; }
.major { stroke: #000; stroke-opacity: .25; fill: none; stroke-width: 1; }
.edge { stroke: #777; fill: none; stroke-width: 1.300; }
.axis-x { stroke: #ff8080; fill: none; stroke-width: 1.200; }
.axis-y { stroke: #80ff80; fill: none; stroke-width: 1.200; }
#grid-labels { font-size: 15px; fill: #888; }
.mesh { fill: none; stroke: #000; stroke-opacity: .46; stroke-width: 2.300; }
.mesh.cap { stroke-opacity: .36; }
.viewcube { position: absolute; left: 1800px; top: 15px; overflow: visible; }
.face { fill: #8a8f96; }
.ax { font-size: 14px; } .ax.z { fill: #7878f0; } .ax.xx { fill: #f08080; }

.browser { position: absolute; left: 5px; top: 5px; width: 374px; }
.panel-head, .comments { height: 31px; border: 1px solid #c6c6c6; border-bottom-width: 2px; background: #f1f1f1; display: flex; align-items: center; color: #666; font-size: 13.800px; padding: 0 12px 0 5px; }
.panel-head span { flex: 1; margin-left: 11px; }
.comments { position: absolute; left: 5px; top: 809px; width: 374px; border-top: 0; padding-top: 2px; }
.comments span { flex: 1; margin-left: 25px; }
.tree { padding-top: 6px; display: flex; flex-direction: column; gap: 5px; font-size: 13.900px; }
.row { display: flex; height: 25px; align-items: center; }
.l0 { margin-left: 19px; } .l1 { margin-left: 42px; } .l2 { margin-left: 64px; } .l3 { margin-left: 87px; }
.tw { width: 26px; display: flex; padding-left: 4px; }
.c { width: 31px; height: 25px; background: #f1f1f1; display: flex; align-items: center; justify-content: center; box-shadow: inset -1px 0 #f8f8f8; flex: none; padding-right: 4px; }
.t { height: 25px; line-height: 27px; background: #f1f1f1; padding-left: 10px; white-space: nowrap; }
.w96 { width: 96px; } .w111 { width: 111px; } .w106 { width: 106px; } .w61 { width: 61px; } .w141 { width: 141px; } .w116 { width: 116px; } .w76 { width: 76px; } .w56 { width: 56px; } .w66 { width: 66px; }
.sel { height: 20px; display: flex; align-items: center; background: #7f7f7f; color: #fff; padding-left: 3px; outline: 1px solid #eee; box-shadow: 0 0 0 2px #ddd; clip-path: inset(-3px 0); }
.sel.light { background: #949494; }
.sel b { white-space: nowrap; }
.light { width: 177px; } .light b { margin-left: 18px; }
.study { width: 227px; margin-left: 2px; } .stress { margin-left: 12px; } .study b { margin-left: 19px; }
.load { width: 127px; } .load b { margin-left: 20px; }

.navbar { position: absolute; left: 831px; top: 808px; width: 258px; height: 30px; background: #f1f1f1; display: flex; align-items: center; padding-left: 4px; }
.navbar .caret { margin-left: 6px; }
.n2 { margin-left: 9px; } .n3 { margin-left: 13px; } .n4 { margin-left: 13px; } .n5 { margin-left: 12px; } .navbar .c2 { margin-left: 7px; } .n6 { margin-left: 8px; } .navbar .c3 { margin-left: 3px; } .n7 { margin-left: 9px; }

.result-controls { position: absolute; left: 1589px; top: 387.500px; width: 127px; display: flex; flex-direction: column; gap: 10.500px; font-size: 14px; }
.rc { height: 27px; background: #f1f1f1; display: flex; align-items: center; padding-bottom: 1px; }
.warn { width: 39px; height: 27px; background: #ffa51f; color: #fff; font: bold 24px/27px "Liberation Sans", sans-serif; text-align: center; padding-right: 2px; }
.rc-load { display: flex; align-items: center; gap: 2px; padding-left: 2px; white-space: nowrap; }
.safety { padding: 0 6px 1px 2px; width: 126px; justify-content: space-between; }
.buttons { width: 77px; padding: 0 13px 1px 7px; justify-content: space-between; }
.legend { position: absolute; left: 1715px; top: 370px; }
.scale text { font-size: 15px; fill: #000; stroke: #fff; stroke-width: 1.500px; stroke-opacity: .7; paint-order: stroke; }
.scale .min { fill: #ffa51f; }
.stats { position: absolute; left: 1653px; top: 706px; margin: 0; display: grid; grid-template-columns: 127px 60px; font-size: 14.700px; line-height: 17px; color: #111; }
.stats dd { margin: 0; }

.taskbar { height: 60px; flex: none; background: #202122; border-top: 1px solid #444; display: flex; align-items: center; color: #fff; font-family: "Open Sans", "Noto Sans", sans-serif; font-size: 14.500px; line-height: 20px; }
.weather { width: 447px; padding: 0 0 2px 25px; display: flex; align-items: center; gap: 9px; letter-spacing: -.2px; }
.weather span { color: #ccc; }
.apps { display: flex; align-items: center; width: 1163px; }
.search { width: 275px; height: 40px; margin-left: 17px; margin-right: 2px; border-radius: 20px; background: #3c3c3c; border: 1px solid #555; display: flex; align-items: center; padding: 0 6px 0 14px; font-size: 16.500px; color: #ddd; letter-spacing: -.2px; }
.search span { flex: 1; margin-left: 11px; }
.app { position: relative; width: 55px; height: 49px; display: flex; align-items: center; justify-content: center; }
.app:not(.nodot)::after { content: ""; position: absolute; left: 24px; bottom: 0; width: 8px; height: 4px; border-radius: 2px; background: #999; }
.app.current { width: 49px; margin-left: 3px; background: #303132; border-radius: 5px; box-shadow: inset 0 0 0 1px #3c3c3c; }
.app.current::after { left: 15px; width: 20px; background: #4cc2ff; bottom: 1px; }
.badge { position: absolute; left: 29px; top: 2px; width: 20px; height: 20px; border-radius: 50%; background: #4cc2ff; color: #111; font-weight: normal; text-align: center; }
.face-badge { position: absolute; left: 29px; top: 2px; width: 20px; height: 20px; border-radius: 50%; }
.grey { background: radial-gradient(circle at 50% 75%, #ccc 20%, #777 45%, #222 65%); }
.black { background: #050505; }
.brown { background: radial-gradient(circle at 50% 45%, #a07060 15%, #3a2a26 40%, #1c1614 65%); }
.word { position: absolute; left: 15px; top: 15px; font-size: 12px; }
.eff { position: absolute; left: 21px; top: 12px; font-size: 17px; line-height: 18px; }
.n360 { position: absolute; left: 19px; top: 33px; font-size: 7px; line-height: 8px; }
.tray { flex: 1; display: flex; align-items: center; padding-bottom: 1px; }
.chev { margin-left: -6px; }
.lang { width: 40px; text-align: center; margin-left: 22px; letter-spacing: -.2px; }
.net { margin-left: 15px; } .snd { margin-left: 10px; } .bat { margin-left: 10px; }
.clock { width: 90px; text-align: right; letter-spacing: -.1px; }
.bell { margin-left: 11px; }
```
FILE: scene.js
```js
// Ground grid: isometric plane, a runs down-right and b runs down-left from the apex.
const apex = [976, 204], ux = 83.12, uy = 48, A = 12.2, B = 12;
const pt = (a, b) => [apex[0] + (a - b) * ux, apex[1] + (a + b) * uy];
const seg = (p, q) => `M${p[0].toFixed(1)} ${p[1].toFixed(1)}L${q[0].toFixed(1)} ${q[1].toFixed(1)}`;
let minor = '', major = '';
for (let k = 1; k < 61; k++) {
  const s = seg(pt(k / 5, 0), pt(k / 5, B));
  if (k === 30) continue;
  if (k % 5) minor += s; else major += s;
}
for (let k = 1; k < 60; k++) {
  const s = seg(pt(0, k / 5), pt(A, k / 5));
  if (k === 31) continue;
  if (k % 5 !== 1) minor += s; else major += s;
}
const setD = (id, d) => document.getElementById(id).setAttribute('d', d);
setD('grid-minor', minor);
setD('grid-major', major);
setD('grid-x', seg(pt(0, 6.2), pt(A, 6.2)));
setD('grid-y', seg(pt(6, 0), pt(6, B)));
setD('grid-edge', seg(pt(0, 0), pt(A, 0)) + seg(pt(A, 0), pt(A, B)) + seg(pt(A, B), pt(0, B)) + seg(pt(0, B), pt(0, 0)));

const labels = document.getElementById('grid-labels');
function label(text, matrix, x, y) {
  const t = document.createElementNS('http://www.w3.org/2000/svg', 'text');
  t.setAttribute('transform', `matrix(${matrix} ${x} ${y})`);
  t.textContent = text;
  labels.appendChild(t);
}
for (let a = 0; a < 6; a++) {
  const p = pt(a, B);
  label(300 - 50 * a, '.86 -.5 .72 .42', p[0] + 7, p[1] + 0);
}
for (let n = 0; n < 4; n++) {
  const p = pt(A, n + 1.2);
  label(250 - 50 * n, '.86 .5 -.72 .42', p[0] + 1, p[1] + 4);
}

// Surface mesh: a jittered, subdivided icosahedron projected onto an ellipse.
const g = (1 + Math.sqrt(5)) / 2;
const V = [[-1, g, 0], [1, g, 0], [-1, -g, 0], [1, -g, 0], [0, -1, g], [0, 1, g], [0, -1, -g], [0, 1, -g], [g, 0, -1], [g, 0, 1], [-g, 0, -1], [-g, 0, 1]];
const F = [[0, 11, 5], [0, 5, 1], [0, 1, 7], [0, 7, 10], [0, 10, 11], [1, 5, 9], [5, 11, 4], [11, 10, 2], [10, 7, 6], [7, 1, 8], [3, 9, 4], [3, 4, 2], [3, 2, 6], [3, 6, 8], [3, 8, 9], [4, 9, 5], [2, 4, 11], [6, 2, 10], [8, 6, 7], [9, 8, 1]];
const hash = (v, s) => { const n = Math.sin(v[0] * 127.1 + v[1] * 311.7 + v[2] * 74.7 + s * 53.3) * 43758.5453; return n - Math.floor(n) - .5; };
function meshPath(n, cx, cy, rx, ry, rot) {
  const seen = new Set();
  let d = '';
  const [c, s] = [Math.cos(rot), Math.sin(rot)];
  const node = (f, i, j) => {
    const k = n - i - j;
    let v = [0, 1, 2].map(t => (V[f[0]][t] * k + V[f[1]][t] * i + V[f[2]][t] * j));
    const l = Math.hypot(...v);
    v = v.map(t => Math.round(t / l * 1e4) / 1e4);
    const q = .45 / n;
    v = v.map((t, m) => t + q * hash(v, m));
    const w = [v[0] * c - v[1] * s, v[0] * s + v[1] * c, v[2]];
    return [w[0], w[1] * .8 - w[2] * .6, w[1] * .6 + w[2] * .8];
  };
  const edge = (p, q) => {
    if (p[2] < -.05 || q[2] < -.05) return;
    const a = `${(cx + p[0] * rx).toFixed(0)} ${(cy + p[1] * ry).toFixed(0)}`;
    const b = `${(cx + q[0] * rx).toFixed(0)} ${(cy + q[1] * ry).toFixed(0)}`;
    const key = a < b ? a + b : b + a;
    if (seen.has(key)) return;
    seen.add(key);
    d += `M${a}L${b}`;
  };
  for (const f of F) for (let i = 0; i < n; i++) for (let j = 0; i + j < n; j++) {
    const p = node(f, i, j), q = node(f, i + 1, j), r = node(f, i, j + 1);
    edge(p, q); edge(q, r); edge(r, p);
  }
  return d;
}
setD('mesh-body', meshPath(14, 768, 716, 690, 640, .5));
setD('mesh-cap', meshPath(12, 880, 800, 568, 545, .9));
```
